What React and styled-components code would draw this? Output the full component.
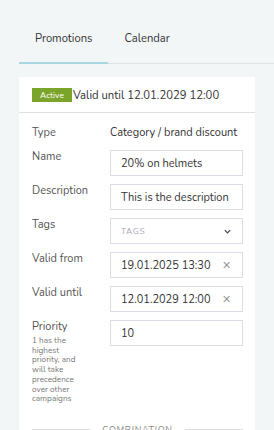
import React from "react";
import styled, { createGlobalStyle } from "styled-components";

const GlobalStyle = createGlobalStyle`
  body {
    margin: 0;
    background: #f2f6f7;
    font-family: "Nunito", Lato, "Open Sans", sans-serif;
    color: #333;
  }
`;

const Page = styled.div`
  padding: 0 0 0 19px;
  min-height: 430px;
`;

const Tabs = styled.div`
  display: flex;
  padding-top: 28px;
  border-bottom: 1px solid #dde2e4;
`;

const Tab = styled.div`
  padding: 3px 16px 15px;
  font-size: 11.2px;
  line-height: 16px;
  color: #333;
  margin-bottom: -1px;
  border-bottom: 2px solid ${({ $active }) => ($active ? "#a9d7de" : "transparent")};
`;

const Card = styled.div`
  background: #fff;
  margin: 13px 19px 0 0;
`;

const CardHeader = styled.div`
  display: flex;
  align-items: center;
  height: 34px;
  padding: 1px 13px 0;
  border-bottom: 1px solid #dfe0e2;
  font-size: 11.3px;
  color: #333;
`;

const Badge = styled.span`
  background: #7aa52a;
  color: #fff;
  font-size: 8.5px;
  padding: 2px 8px;
  margin-right: 1px;
  line-height: 10px;
`;

const Form = styled.div`
  display: grid;
  grid-template-columns: 78px 133px;
  row-gap: 8px;
  padding: 13px 12px 0 13px;
  align-items: start;
`;

const Label = styled.div`
  font-size: 11px;
  line-height: 14px;
  color: #555;
`;

const Help = styled.div`
  width: 48px;
  font-size: 8.2px;
  line-height: 9.7px;
  color: #777;
  margin-top: 2px;
`;

const Value = styled.div`
  font-size: 11px;
  line-height: 14px;
  color: #333;
  padding-bottom: 2px;
  white-space: nowrap;
`;

const Field = styled.div`
  display: flex;
  align-items: center;
  justify-content: space-between;
  box-sizing: border-box;
  height: 26px;
  border: 1px solid #dcdce6;
  padding: 0 10px;
  font-size: 11px;
  color: #333;
  white-space: nowrap;
  overflow: hidden;
`;

const Placeholder = styled.span`
  font-size: 8.5px;
  letter-spacing: 0.6px;
  color: #a9aab5;
`;

const Clear = styled.span`
  color: #999;
  font-size: 11px;
  margin-right: 1px;
`;

const Divider = styled.div`
  display: flex;
  align-items: center;
  gap: 12px;
  margin: 20px 12px 0 13px;
  font-size: 9px;
  letter-spacing: 0.7px;
  color: #888;
  &::before,
  &::after {
    content: "";
    flex: 1;
    border-top: 1px solid #dfe0e2;
  }
`;

const Chevron = () => (
  <svg width="9" height="9" viewBox="0 0 10 10">
    <path d="M2 3.5 L5 6.5 L8 3.5" fill="none" stroke="#445" strokeWidth="1.4" />
  </svg>
);

export default function App() {
  return (
    <Page>
      <GlobalStyle />
      <Tabs>
        <Tab $active>Promotions</Tab>
        <Tab>Calendar</Tab>
      </Tabs>
      <Card>
        <CardHeader>
          <Badge>Active</Badge>
          Valid until 12.01.2029 12:00
        </CardHeader>
        <Form>
          <Label>Type</Label>
          <Value>Category / brand discount</Value>

          <Label>Name</Label>
          <Field>20% on helmets</Field>

          <Label>Description</Label>
          <Field>This is the description</Field>

          <Label>Tags</Label>
          <Field>
            <Placeholder>TAGS</Placeholder>
            <Chevron />
          </Field>

          <Label>Valid from</Label>
          <Field>
            19.01.2025 13:30 <Clear>✕</Clear>
          </Field>

          <Label>Valid until</Label>
          <Field>
            12.01.2029 12:00 <Clear>✕</Clear>
          </Field>

          <Label>
            Priority
            <Help>
              1 has the highest priority, and will take precedence over other
              campaigns
            </Help>
          </Label>
          <Field>10</Field>
        </Form>
        <Divider>COMBINATION</Divider>
      </Card>
    </Page>
  );
}
